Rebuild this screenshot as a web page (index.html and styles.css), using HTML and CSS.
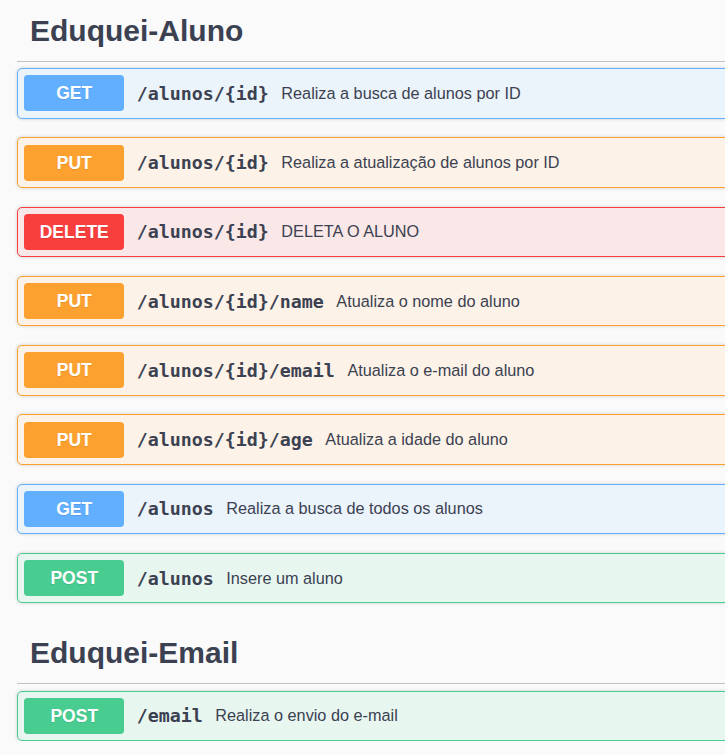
FILE: index.html
```html
<!DOCTYPE html>
<html lang="pt">
<head>
<meta charset="utf-8">
<title>Eduquei</title>
<link rel="stylesheet" href="styles.css">
</head>
<body>
<div class="wrapper">
  <section class="tag-section">
    <h4 class="tag first">Eduquei-Aluno</h4>
    <div class="ops">
      <div class="op get"><span class="method">GET</span><span class="path">/alunos/{id}</span><span class="desc">Realiza a busca de alunos por ID</span></div>
      <div class="op put"><span class="method">PUT</span><span class="path">/alunos/{id}</span><span class="desc">Realiza a atualização de alunos por ID</span></div>
      <div class="op delete"><span class="method">DELETE</span><span class="path">/alunos/{id}</span><span class="desc">DELETA O ALUNO</span></div>
      <div class="op put"><span class="method">PUT</span><span class="path">/alunos/{id}/name</span><span class="desc">Atualiza o nome do aluno</span></div>
      <div class="op put"><span class="method">PUT</span><span class="path">/alunos/{id}/email</span><span class="desc">Atualiza o e-mail do aluno</span></div>
      <div class="op put"><span class="method">PUT</span><span class="path">/alunos/{id}/age</span><span class="desc">Atualiza a idade do aluno</span></div>
      <div class="op get"><span class="method">GET</span><span class="path">/alunos</span><span class="desc">Realiza a busca de todos os alunos</span></div>
      <div class="op post"><span class="method">POST</span><span class="path">/alunos</span><span class="desc">Insere um aluno</span></div>
    </div>
  </section>
  <section class="tag-section">
    <h4 class="tag">Eduquei-Email</h4>
    <div class="ops">
      <div class="op post"><span class="method">POST</span><span class="path">/email</span><span class="desc">Realiza o envio do e-mail</span></div>
    </div>
  </section>
</div>
</body>
</html>
```

FILE: styles.css
```css
html, body {
  margin: 0;
  padding: 0;
  background: #fafafa;
  overflow: hidden;
}
body {
  font-family: "Liberation Sans", Arial, sans-serif;
  color: #3b4151;
}
.wrapper {
  padding-left: 17px;
  width: 760px;
}
.tag {
  margin: 0 0 6.5px 0;
  padding: 12px 25px 12px 13px;
  height: 37px;
  line-height: 37px;
  font-size: 30px;
  font-weight: bold;
  color: #3b4151;
  border-bottom: 1px solid rgba(59, 65, 81, 0.3);
}
.tag.first {
  margin-top: -0.5px;
}
.ops {
  display: flex;
  flex-direction: column;
  gap: 18.75px;
}
.tag-section + .tag-section {
  margin-top: 18.75px;
}
.op {
  display: flex;
  align-items: center;
  padding: 6.25px;
  border: 1.25px solid;
  border-radius: 5px;
  box-shadow: 0 0 3.75px rgba(0, 0, 0, 0.19);
  height: 36px;
}
.method {
  box-sizing: border-box;
  width: 100px;
  height: 36px;
  line-height: 36px;
  border-radius: 3.75px;
  text-align: center;
  color: #fff;
  font-weight: bold;
  font-size: 17.5px;
  text-shadow: 0 1.25px 0 rgba(0, 0, 0, 0.1);
  flex-shrink: 0;
}
.path {
  padding: 0 12.5px;
  font-family: "DejaVu Sans Mono", "Liberation Mono", monospace;
  font-weight: bold;
  font-size: 18.3px;
  color: #3b4151;
}
.desc {
  font-size: 16.25px;
  color: #3b4151;
}
.get { background: #ebf3fb; border-color: #61affe; }
.get .method { background: #61affe; }
.put { background: #fcf2e7; border-color: #fca130; }
.put .method { background: #fca130; }
.delete { background: #fae7e7; border-color: #f93e3e; }
.delete .method { background: #f93e3e; }
.post { background: #e8f6f0; border-color: #49cc90; }
.post .method { background: #49cc90; }
```
